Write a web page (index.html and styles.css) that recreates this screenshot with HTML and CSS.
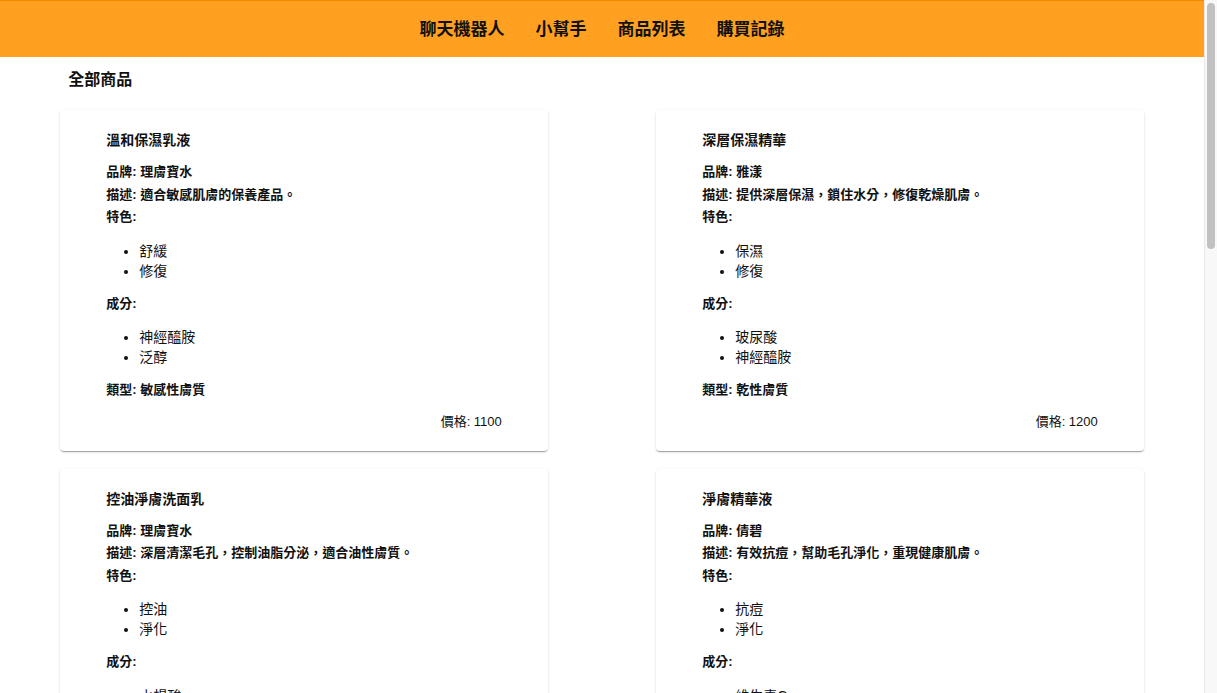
FILE: index.html
```html
<!DOCTYPE html>
<html lang="zh-Hant">
<head>
<meta charset="utf-8">
<title>商品列表</title>
<link rel="stylesheet" href="styles.css">
</head>
<body>
<div class="page">
<header class="topbar">
  <nav class="nav">
    <a class="nav-link" href="#">聊天機器人</a>
    <a class="nav-link" href="#">小幫手</a>
    <a class="nav-link" href="#">商品列表</a>
    <a class="nav-link" href="#">購買記錄</a>
  </nav>
</header>
<main class="container">
  <h2 class="page-title">全部商品</h2>
  <div class="grid">
    <div class="card">
      <h3 class="card-title">溫和保濕乳液</h3>
      <p class="line">品牌: 理膚寶水</p>
      <p class="line">描述: 適合敏感肌膚的保養產品。</p>
      <p class="line">特色:</p>
      <ul class="list"><li>舒緩</li><li>修復</li></ul>
      <p class="line">成分:</p>
      <ul class="list"><li>神經醯胺</li><li>泛醇</li></ul>
      <p class="line">類型: 敏感性膚質</p>
      <p class="price">價格: 1100</p>
    </div>
    <div class="card">
      <h3 class="card-title">深層保濕精華</h3>
      <p class="line">品牌: 雅漾</p>
      <p class="line">描述: 提供深層保濕，鎖住水分，修復乾燥肌膚。</p>
      <p class="line">特色:</p>
      <ul class="list"><li>保濕</li><li>修復</li></ul>
      <p class="line">成分:</p>
      <ul class="list"><li>玻尿酸</li><li>神經醯胺</li></ul>
      <p class="line">類型: 乾性膚質</p>
      <p class="price">價格: 1200</p>
    </div>
    <div class="card">
      <h3 class="card-title">控油淨膚洗面乳</h3>
      <p class="line">品牌: 理膚寶水</p>
      <p class="line">描述: 深層清潔毛孔，控制油脂分泌，適合油性膚質。</p>
      <p class="line">特色:</p>
      <ul class="list"><li>控油</li><li>淨化</li></ul>
      <p class="line">成分:</p>
      <ul class="list"><li>水楊酸</li><li>鋅</li></ul>
      <p class="line">類型: 油性膚質</p>
      <p class="price">價格: 650</p>
    </div>
    <div class="card">
      <h3 class="card-title">淨膚精華液</h3>
      <p class="line">品牌: 倩碧</p>
      <p class="line">描述: 有效抗痘，幫助毛孔淨化，重現健康肌膚。</p>
      <p class="line">特色:</p>
      <ul class="list"><li>抗痘</li><li>淨化</li></ul>
      <p class="line">成分:</p>
      <ul class="list"><li>維生素C</li><li>水楊酸</li></ul>
      <p class="line">類型: 油性膚質</p>
      <p class="price">價格: 1500</p>
    </div>
    <div class="card">
      <h3 class="card-title">舒緩修護面霜</h3>
      <p class="line">品牌: 雅漾</p>
      <p class="line">描述: 舒緩肌膚不適，強化肌膚屏障。</p>
      <p class="line">特色:</p>
      <ul class="list"><li>舒緩</li><li>修護</li></ul>
      <p class="line">成分:</p>
      <ul class="list"><li>溫泉水</li><li>神經醯胺</li></ul>
      <p class="line">類型: 敏感性膚質</p>
      <p class="price">價格: 980</p>
    </div>
    <div class="card">
      <h3 class="card-title">清爽防曬乳</h3>
      <p class="line">品牌: 理膚寶水</p>
      <p class="line">描述: 輕盈不黏膩，全天候防護紫外線。</p>
      <p class="line">特色:</p>
      <ul class="list"><li>防曬</li><li>清爽</li></ul>
      <p class="line">成分:</p>
      <ul class="list"><li>氧化鋅</li><li>維生素E</li></ul>
      <p class="line">類型: 混合性膚質</p>
      <p class="price">價格: 880</p>
    </div>
    <div class="card">
      <h3 class="card-title">亮白精華露</h3>
      <p class="line">品牌: 倩碧</p>
      <p class="line">描述: 淡化暗沉，提亮膚色，打造透亮肌膚。</p>
      <p class="line">特色:</p>
      <ul class="list"><li>美白</li><li>提亮</li></ul>
      <p class="line">成分:</p>
      <ul class="list"><li>維生素C</li><li>菸鹼醯胺</li></ul>
      <p class="line">類型: 一般膚質</p>
      <p class="price">價格: 1350</p>
    </div>
    <div class="card">
      <h3 class="card-title">保濕化妝水</h3>
      <p class="line">品牌: 雅漾</p>
      <p class="line">描述: 補充水分，調理肌膚，提升後續保養吸收。</p>
      <p class="line">特色:</p>
      <ul class="list"><li>保濕</li><li>調理</li></ul>
      <p class="line">成分:</p>
      <ul class="list"><li>玻尿酸</li><li>甘油</li></ul>
      <p class="line">類型: 乾性膚質</p>
      <p class="price">價格: 720</p>
    </div>
    <div class="card">
      <h3 class="card-title">抗老緊緻霜</h3>
      <p class="line">品牌: 倩碧</p>
      <p class="line">描述: 改善細紋，提升肌膚彈性與緊緻度。</p>
      <p class="line">特色:</p>
      <ul class="list"><li>抗老</li><li>緊緻</li></ul>
      <p class="line">成分:</p>
      <ul class="list"><li>視黃醇</li><li>胜肽</li></ul>
      <p class="line">類型: 熟齡膚質</p>
      <p class="price">價格: 1800</p>
    </div>
    <div class="card">
      <h3 class="card-title">溫和卸妝水</h3>
      <p class="line">品牌: 理膚寶水</p>
      <p class="line">描述: 溫和卸除彩妝，不刺激肌膚。</p>
      <p class="line">特色:</p>
      <ul class="list"><li>卸妝</li><li>溫和</li></ul>
      <p class="line">成分:</p>
      <ul class="list"><li>膠束水</li><li>甘油</li></ul>
      <p class="line">類型: 敏感性膚質</p>
      <p class="price">價格: 560</p>
    </div>
  </div>
</main>
</div>
<div class="scrollbar" aria-hidden="true"><div class="scroll-thumb"></div></div>
</body>
</html>
```

FILE: styles.css
```css
html, body {
  margin: 0;
  padding: 0;
  background: #ffffff;
}

body {
  font-family: "Liberation Sans", "Noto Sans CJK TC", sans-serif;
  color: #111111;
}

.page {
  margin-right: 13px;
}

.scrollbar {
  position: fixed;
  top: 0;
  right: 0;
  width: 12px;
  height: 100vh;
  background: #f8f8f8;
  border-left: 1px solid #e8e8e8;
}

.scroll-thumb {
  margin: 3px 0 0 2px;
  width: 8px;
  height: 246px;
  border-radius: 4px;
  background: #c1c1c1;
}

.topbar {
  height: 56px;
  background: #ffa020;
  border-top: 1px solid #f08a00;
  display: flex;
  align-items: center;
  justify-content: center;
}

.nav {
  display: flex;
  gap: 31px;
  align-items: center;
  padding-top: 2px;
}

.nav-link {
  font-size: 17px;
  font-weight: bold;
  color: #111111;
  text-decoration: none;
  line-height: 24px;
}

.container {
  width: 90%;
  margin: 0 auto;
  padding-bottom: 20px;
}

.page-title {
  margin: 11px 0 18px 8px;
  font-size: 16px;
  line-height: 24px;
  font-weight: bold;
}

.grid {
  display: flex;
  flex-wrap: wrap;
  justify-content: space-between;
  row-gap: 18px;
}

.card {
  width: 45%;
  box-sizing: border-box;
  padding: 20px 46px 18px 46px;
  background: #ffffff;
  border-radius: 4px;
  box-shadow: 0 2px 1px -1px rgba(0,0,0,0.2), 0 1px 1px 0 rgba(0,0,0,0.14), 0 1px 3px 0 rgba(0,0,0,0.12);
}

.card-title {
  margin: 0 0 11px 0;
  font-size: 14px;
  line-height: 20px;
  font-weight: bold;
}

.line {
  margin: 0;
  font-size: 13px;
  line-height: 22.5px;
  font-weight: bold;
}

.list {
  margin: 12px 0 12px 0;
  padding-left: 33px;
  font-size: 14px;
  line-height: 20px;
}

.price {
  margin: 9px 0 0 0;
  font-size: 13px;
  line-height: 22px;
  text-align: right;
}
```
